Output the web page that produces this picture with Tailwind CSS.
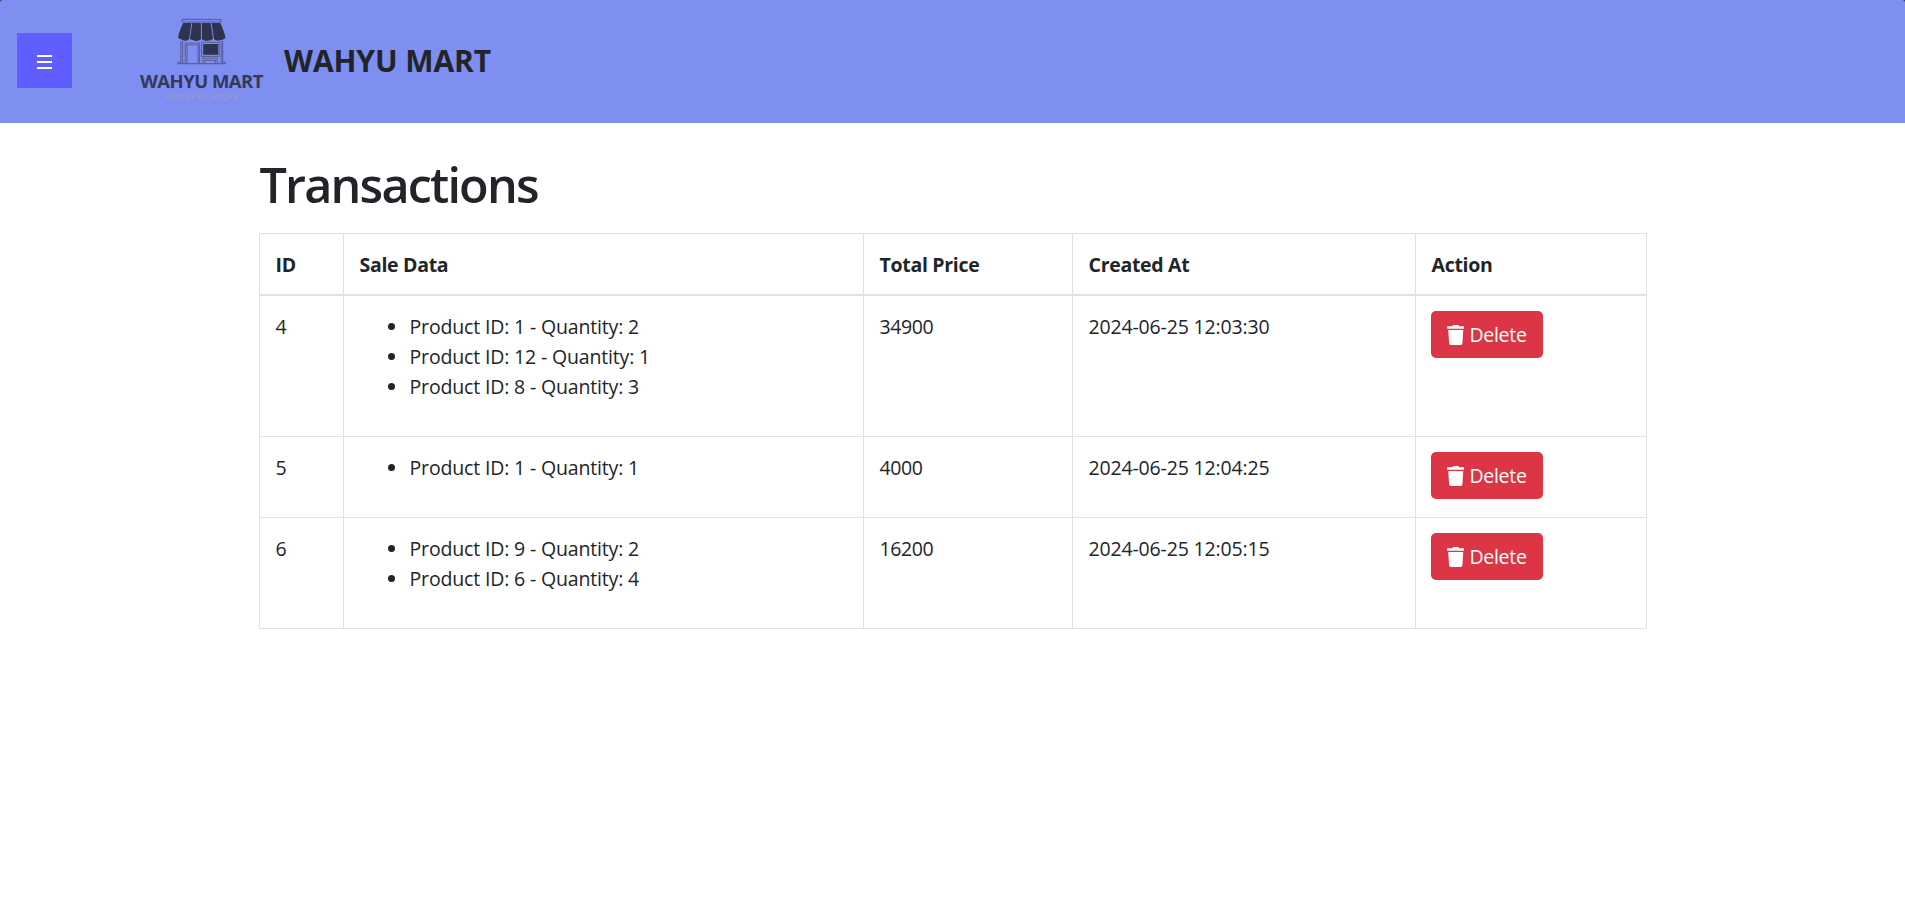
<!DOCTYPE html>
<html lang="en">
<head>
<meta charset="utf-8">
<title>Wahyu Mart - Transactions</title>
<script src="https://cdn.jsdelivr.net/npm/@tailwindcss/browser@4"></script>
</head>
<body class="min-h-screen overflow-hidden bg-white font-['Open_Sans',sans-serif] text-[19.5px] leading-[30px] text-[#212529]">
<svg class="hidden">
  <symbol id="trash" viewBox="0 0 448 512"><path fill="currentColor" d="M432 32H312l-9.4-18.7A24 24 0 0 0 281.1 0H166.8a23.72 23.72 0 0 0-21.4 13.3L136 32H16A16 16 0 0 0 0 48v32a16 16 0 0 0 16 16h416a16 16 0 0 0 16-16V48a16 16 0 0 0-16-16zM53.2 467a48 48 0 0 0 47.9 45h245.8a48 48 0 0 0 47.9-45L416 128H32z"/></symbol>
</svg>
<div class="bg-[#333a4a]">
<header class="flex h-[123px] items-center rounded-t-[3px] bg-[#7f8ef1] pb-[2px] pl-[17px]">
  <button class="flex size-[55px] items-center justify-center bg-[#615eff] pt-[2px] text-white" aria-label="Menu">
    <svg class="h-[14px] w-[15px]" viewBox="0 0 15 14" fill="currentColor"><path d="M0 0h15v2H0zM0 6h15v2H0zM0 12h15v2H0z"/></svg>
  </button>
  <svg class="ml-[58px] h-[123px] w-[145px] shrink-0 self-start" viewBox="130 0 145 123" fill="none">
    <g stroke="#5a6199" stroke-width="1.1">
      <rect x="182.3" y="19.4" width="38.6" height="2.6"/>
      <path d="M180.8 41v21.3h-2.8v1.3h47.5v-1.3h-2.8V41M182.6 41v22M221.2 41v22"/>
      <path d="M185.3 63.4V43h14.2v20.4M187 63.4V44.8h11v18.6"/>
      <rect x="201.6" y="42.3" width="17.6" height="14.2"/>
      <path d="M202.8 63.4v-5.2h14.4v5.2M204.6 63.4v-3h10.8v3"/>
    </g>
    <rect x="203.2" y="44" width="15" height="10.8" fill="#303350"/>
    <path fill="#303350" d="M183.2 23h8.2l-2.3 16c-.6 1.400-3 2-5.300 1.400-1.800-.6-4-1.400-5.900-2.600 1.200-5.500 2.800-10 5.300-14.800zM192.300 23h8.600v16.300c-1.900 1.500-4 2-5.900 1.500-2-.5-3.800-1-5.100-2zM201.900 23h8.700l2.500 15.800c-1.500 1.200-3.500 1.900-5.500 2-2 .1-4.200-.4-5.700-1.500zM211.600 23h8.700c2.300 4.800 4 9.300 5.300 14.800-1.600 1.400-3.800 2.200-5.900 2.600-2.300.4-4.600-.1-5.700-1.400z"/>
    <text x="140" y="88" class="font-['Open_Sans',sans-serif] text-[18.5px] font-bold" fill="#343859" textLength="123.500" lengthAdjust="spacing">WAHYU MART</text>
    <text x="165.500" y="98.500" class="font-['Open_Sans',sans-serif] text-[8px]" fill="#a0a1c8" textLength="73" lengthAdjust="spacing">GROCERY STORE</text>
  </svg>
  <span class="ml-[9px] text-[30px] leading-[45px] font-bold tracking-[-0.1px]">WAHYU MART</span>
</header>
</div>
<main class="mx-auto w-[1388px] pt-[31px]">
  <h1 class="mb-[19px] h-[60px] pl-[1px] text-[48.5px] leading-[60px] font-[550] tracking-[-1.8px]">Transactions</h1>
  <table class="w-[1388px] table-fixed border-separate border-spacing-0 border-t border-l border-[#dee2e6] text-left [&_td]:border-r [&_td]:border-b [&_td]:border-[#dee2e6] [&_td]:px-[16px] [&_td]:pt-[16px] [&_td]:pb-[14px] [&_td]:align-top [&_th]:border-r [&_th]:border-b-2 [&_th]:border-[#dee2e6] [&_th]:px-[16px] [&_th]:pt-[16px] [&_th]:pb-[14px] [&_th]:font-bold [&_ul]:mb-[20px] [&_ul]:list-disc [&_ul]:pl-[49px] [&_li]:pl-px">
    <colgroup><col class="w-[84px]"><col class="w-[520px]"><col class="w-[209px]"><col class="w-[343px]"><col class="w-[231px]"></colgroup>
    <thead>
      <tr class="tracking-[-0.3px]"><th>ID</th><th>Sale Data</th><th>Total Price</th><th>Created At</th><th>Action</th></tr>
    </thead>
    <tbody>
      <tr>
        <td>4</td>
        <td><ul class="tracking-[-0.16px]"><li>Product ID: 1 - Quantity: 2</li><li>Product ID: 12 - Quantity: 1</li><li>Product ID: 8 - Quantity: 3</li></ul></td>
        <td class="tracking-[-0.37px]">34900</td>
        <td class="tracking-[-0.16px]">2024-06-25 12:03:30</td>
        <td><button class="-mt-px -ml-px flex h-[47px] w-[112px] items-center rounded-[5px] bg-[#dc3545] pt-[1px] pl-[16px] tracking-[-0.3px] text-white"><svg class="mr-[5.5px] h-[20px] w-[17.5px]"><use href="#trash"/></svg>Delete</button></td>
      </tr>
      <tr>
        <td>5</td>
        <td><ul class="tracking-[-0.16px]"><li>Product ID: 1 - Quantity: 1</li></ul></td>
        <td class="tracking-[-0.37px]">4000</td>
        <td class="tracking-[-0.16px]">2024-06-25 12:04:25</td>
        <td><button class="-mt-px -ml-px flex h-[47px] w-[112px] items-center rounded-[5px] bg-[#dc3545] pt-[1px] pl-[16px] tracking-[-0.3px] text-white"><svg class="mr-[5.5px] h-[20px] w-[17.5px]"><use href="#trash"/></svg>Delete</button></td>
      </tr>
      <tr>
        <td>6</td>
        <td><ul class="tracking-[-0.16px]"><li>Product ID: 9 - Quantity: 2</li><li>Product ID: 6 - Quantity: 4</li></ul></td>
        <td class="tracking-[-0.37px]">16200</td>
        <td class="tracking-[-0.16px]">2024-06-25 12:05:15</td>
        <td><button class="-mt-px -ml-px flex h-[47px] w-[112px] items-center rounded-[5px] bg-[#dc3545] pt-[1px] pl-[16px] tracking-[-0.3px] text-white"><svg class="mr-[5.5px] h-[20px] w-[17.5px]"><use href="#trash"/></svg>Delete</button></td>
      </tr>
    </tbody>
  </table>
</main>
</body>
</html>
